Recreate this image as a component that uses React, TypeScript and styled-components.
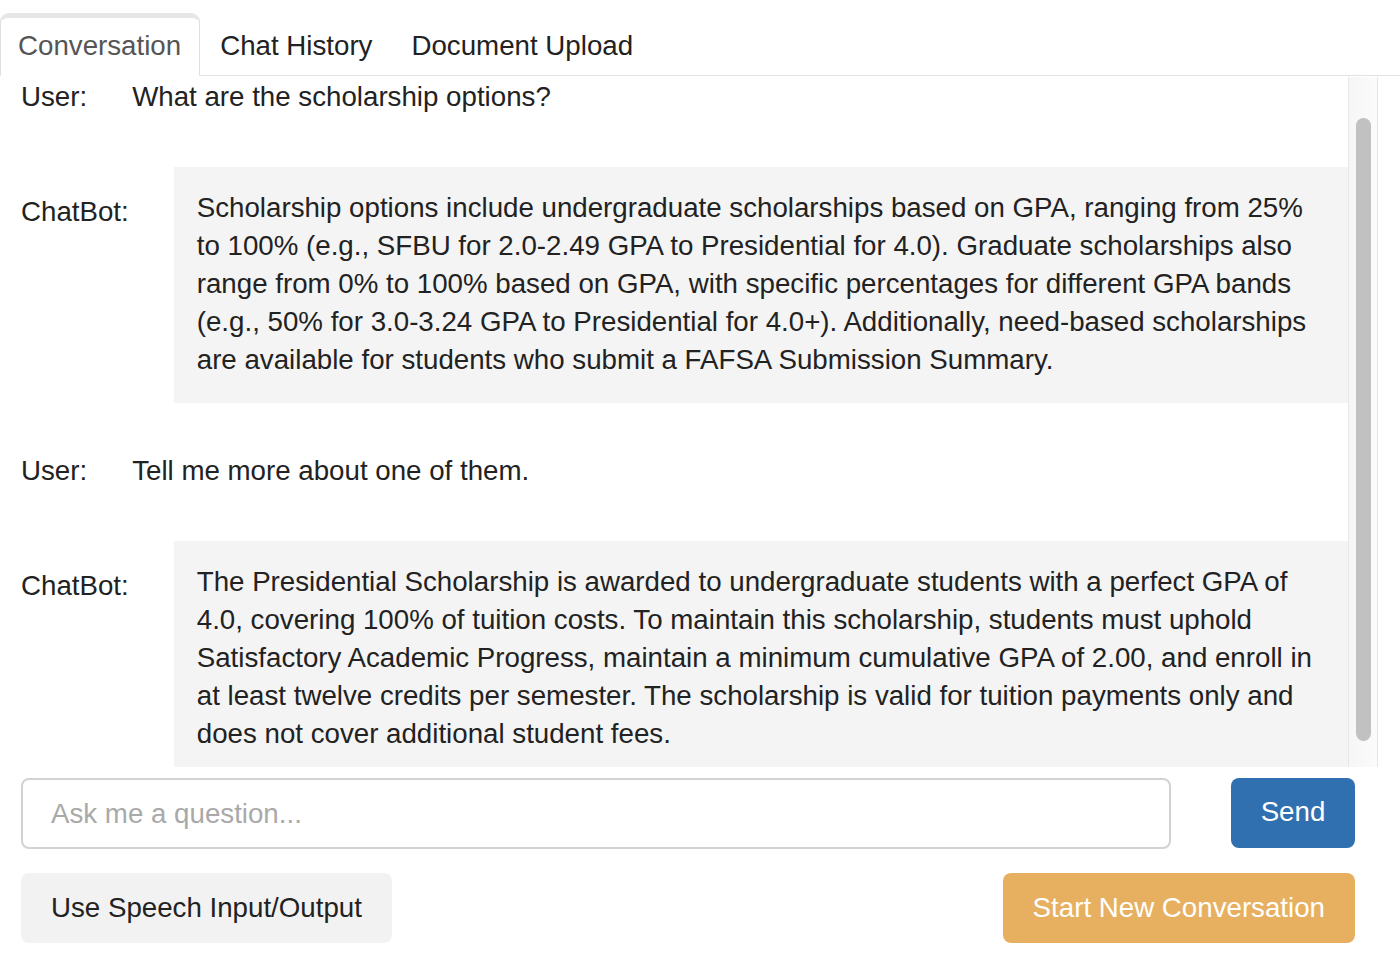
import React from "react";
import styled, { createGlobalStyle } from "styled-components";

const GlobalStyle = createGlobalStyle`
  html, body {
    margin: 0;
    padding: 0;
    background: #ffffff;
  }
  body {
    font-family: "Liberation Sans", Helvetica, Arial, sans-serif;
    color: #333333;
  }
  * { box-sizing: border-box; }
`;

const FONT_SIZE = "27.7px";

const Page = styled.div`
  width: 1400px;
  height: 976px;
  display: flex;
  flex-direction: column;
  font-size: ${FONT_SIZE};
  line-height: 38px;
  overflow: hidden;
`;

const TabBar = styled.div`
  display: flex;
  padding-top: 13px;
  border-bottom: 1px solid #e2e2e2;
  height: 76px;
  flex-shrink: 0;
`;

const Tab = styled.div<{ $active?: boolean }>`
  margin-right: 2px;
  margin-bottom: -1px;
  padding: 9px 18px 11px 17px;
  color: ${(p) => (p.$active ? "#555555" : "#222222")};
  background: ${(p) => (p.$active ? "#ffffff" : "transparent")};
  border: 1px solid ${(p) => (p.$active ? "#e0e0e0" : "transparent")};
  border-top: 5px solid ${(p) => (p.$active ? "#e6e6e6" : "transparent")};
  border-bottom-color: transparent;
  border-radius: 9px 9px 0 0;
  white-space: nowrap;
`;

const ChatArea = styled.div`
  display: flex;
  width: 1378px;
  height: 690px;
  margin-top: 1px;
  flex-shrink: 0;
`;

const Viewport = styled.div`
  flex: 1;
  min-width: 0;
  overflow: hidden;
`;

const ScrollTrack = styled.div`
  width: 30px;
  flex-shrink: 0;
  background: linear-gradient(to right, #f6f6f6, #fbfbfb);
  border-left: 1px solid #e6e6e6;
  border-right: 1px solid #e6e6e6;
  padding: 41px 6px 0 7px;
`;

const ScrollThumb = styled.div`
  height: 623px;
  border-radius: 8px;
  background: #c1c1c1;
`;

const MessageList = styled.div`
  display: flex;
  flex-direction: column;
  padding: 1px 0 0 21px;
`;

const MessageRow = styled.div<{ $bot?: boolean }>`
  display: flex;
  align-items: flex-start;
  margin-bottom: ${(p) => (p.$bot ? "49px" : "51px")};
`;

const Speaker = styled.span<{ $bot?: boolean }>`
  flex-shrink: 0;
  margin-right: 45px;
  padding-top: ${(p) => (p.$bot ? "26px" : "0")};
  color: #222222;
`;

const UserText = styled.div`
  color: #222222;
`;

const BotBubble = styled.div`
  flex: 1;
  background: #f4f4f4;
  padding: 22px 24px 24px 23px;
  color: #222222;
`;

const Controls = styled.div`
  display: flex;
  flex-direction: column;
  gap: 24px;
  padding: 11px 45px 0 21px;
`;

const InputRow = styled.div`
  display: flex;
  align-items: flex-start;
  gap: 60px;
`;

const QuestionInput = styled.input`
  flex: 1;
  height: 71px;
  border: 2px solid #d2d2d2;
  border-radius: 8px;
  padding: 0 28px;
  font-family: "Liberation Sans", Helvetica, Arial, sans-serif;
  font-size: ${FONT_SIZE};
  color: #333333;
  outline: none;
  background: #ffffff;

  &::placeholder {
    color: #a9a9a9;
  }
`;

const ActionButton = styled.button<{ $variant: "primary" | "warning" | "plain" }>`
  height: 70px;
  padding: 0 30px;
  border: none;
  border-radius: 8px;
  font-family: "Liberation Sans", Helvetica, Arial, sans-serif;
  font-size: ${FONT_SIZE};
  line-height: 38px;
  cursor: pointer;
  white-space: nowrap;
  background: ${(p) =>
    p.$variant === "primary" ? "#3070b0" : p.$variant === "warning" ? "#e7b061" : "#f2f2f2"};
  color: ${(p) => (p.$variant === "plain" ? "#222222" : "#ffffff")};
`;

const SendButton = styled(ActionButton)`
  width: 124px;
  padding: 0 0 2px 0;
`;

const ButtonRow = styled.div`
  display: flex;
  justify-content: space-between;
  align-items: center;
`;

type Message = { from: "user" | "bot"; text: string };

const messages: Message[] = [
  { from: "user", text: "What are the scholarship options?" },
  {
    from: "bot",
    text: "Scholarship options include undergraduate scholarships based on GPA, ranging from 25% to 100% (e.g., SFBU for 2.0-2.49 GPA to Presidential for 4.0). Graduate scholarships also range from 0% to 100% based on GPA, with specific percentages for different GPA bands (e.g., 50% for 3.0-3.24 GPA to Presidential for 4.0+). Additionally, need-based scholarships are available for students who submit a FAFSA Submission Summary.",
  },
  { from: "user", text: "Tell me more about one of them." },
  {
    from: "bot",
    text: "The Presidential Scholarship is awarded to undergraduate students with a perfect GPA of 4.0, covering 100% of tuition costs. To maintain this scholarship, students must uphold Satisfactory Academic Progress, maintain a minimum cumulative GPA of 2.00, and enroll in at least twelve credits per semester. The scholarship is valid for tuition payments only and does not cover additional student fees.",
  },
];

export default function App() {
  return (
    <>
      <GlobalStyle />
      <Page>
        <TabBar>
          <Tab $active>Conversation</Tab>
          <Tab>Chat History</Tab>
          <Tab>Document Upload</Tab>
        </TabBar>
        <ChatArea>
          <Viewport>
            <MessageList>
              {messages.map((m, i) =>
                m.from === "user" ? (
                  <MessageRow key={i}>
                    <Speaker>User:</Speaker>
                    <UserText>{m.text}</UserText>
                  </MessageRow>
                ) : (
                  <MessageRow key={i} $bot>
                    <Speaker $bot>ChatBot:</Speaker>
                    <BotBubble>{m.text}</BotBubble>
                  </MessageRow>
                )
              )}
            </MessageList>
          </Viewport>
          <ScrollTrack>
            <ScrollThumb />
          </ScrollTrack>
        </ChatArea>
        <Controls>
          <InputRow>
            <QuestionInput placeholder="Ask me a question..." />
            <SendButton $variant="primary">Send</SendButton>
          </InputRow>
          <ButtonRow>
            <ActionButton $variant="plain">Use Speech Input/Output</ActionButton>
            <ActionButton $variant="warning">Start New Conversation</ActionButton>
          </ButtonRow>
        </Controls>
      </Page>
    </>
  );
}
